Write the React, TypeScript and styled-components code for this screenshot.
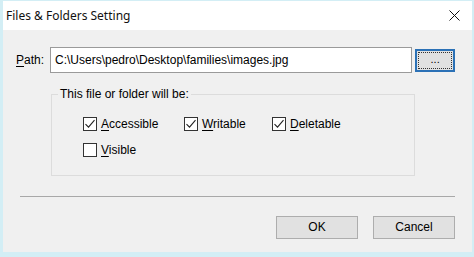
import React from "react";
import styled, { createGlobalStyle } from "styled-components";

const Global = createGlobalStyle`
  html, body { margin: 0; padding: 0; background: #d3eef5; }
  body { font-family: "Liberation Sans", Arial, sans-serif; font-size: 12px; color: #000; }
  * { box-sizing: border-box; }
`;

const Frame = styled.div`
  width: 474px;
  height: 257px;
  background: #d3eef5;
  padding: 1px 2px 5px 3px;
  display: flex;
  flex-direction: column;
`;

const TitleBar = styled.div`
  height: 29px;
  background: #ffffff;
  display: flex;
  align-items: center;
  justify-content: space-between;
  padding: 0 12px 0 3px;
  flex: none;
`;

const Title = styled.span`
  font-family: "Noto Sans", "Liberation Sans", sans-serif;
  font-size: 12px;
  color: #111;
`;

const Body = styled.div`
  flex: 1;
  background: #f0f0f0;
  display: flex;
  flex-direction: column;
  padding: 17px 17px 0 13px;
`;

const PathRow = styled.div`
  display: flex;
  align-items: center;
  height: 26px;
`;

const Label = styled.span`
  width: 34px;
  flex: none;
`;

const Key = styled.span`
  text-decoration: underline;
  text-underline-offset: 2px;
`;

const TextBox = styled.div`
  width: 365px;
  height: 26px;
  background: #fff;
  border: 1px solid #9a9a9a;
  display: flex;
  align-items: center;
  padding-left: 4px;
  white-space: nowrap;
`;

const BrowseButton = styled.button`
  margin-left: 3px;
  width: 40px;
  height: 23px;
  background: #e1e1e1;
  border: 2px solid #2b71b6;
  outline: 1px dotted #333;
  outline-offset: -4px;
  font: inherit;
  font-size: 11px;
  padding: 0 0 2px;
  color: #000;
`;

const Group = styled.fieldset`
  margin: 13px 0 0 35px;
  width: 364px;
  height: 90px;
  border: 1px solid #dcdcdc;
  padding: 14px 0 0 4px;
  display: flex;
  flex-direction: column;
  gap: 10px;
`;

const Legend = styled.legend`
  padding: 0 2px;
  margin-left: 2px;
  line-height: 16px;
`;

const Row = styled.div`
  display: flex;
  height: 16px;
  align-items: center;
  padding-left: 27px;
`;

const Check = styled.label<{ $w?: number }>`
  display: flex;
  align-items: center;
  width: ${(p) => (p.$w ? `${p.$w}px` : "auto")};
  gap: 4px;
`;

const Box = styled.span`
  width: 14px;
  height: 14px;
  border: 1px solid #333;
  background: #fff;
  display: flex;
  align-items: center;
  justify-content: center;
`;

const Separator = styled.div`
  margin: 20px 0 0 4px;
  width: 435px;
  height: 1px;
  background: #a8a8a8;
`;

const Buttons = styled.div`
  display: flex;
  justify-content: flex-end;
  gap: 15px;
  margin-top: 19px;
`;

const Button = styled.button`
  width: 82px;
  height: 23px;
  background: #e1e1e1;
  border: 1px solid #adadad;
  font: inherit;
  color: #000;
  padding: 0 0 1px;
`;

const Tick = () => (
  <svg width="12" height="12" viewBox="0 0 12 12">
    <path d="M1.5 6.2 L4.5 9.2 L10.5 2.2" fill="none" stroke="#222" strokeWidth="1.1" />
  </svg>
);

const CheckBox: React.FC<{ checked?: boolean; k: string; rest: string; w?: number }> = ({ checked, k, rest, w }) => (
  <Check $w={w}>
    <Box>{checked && <Tick />}</Box>
    <span>
      <Key>{k}</Key>
      {rest}
    </span>
  </Check>
);

export default function App() {
  return (
    <>
      <Global />
      <Frame>
        <TitleBar>
          <Title>Files &amp; Folders Setting</Title>
          <svg width="11" height="11" viewBox="0 0 11 11">
            <path d="M0.5 0.5 L10.5 10.5 M10.5 0.5 L0.5 10.5" stroke="#111" strokeWidth="1" />
          </svg>
        </TitleBar>
        <Body>
          <PathRow>
            <Label>
              <Key>P</Key>ath:
            </Label>
            <TextBox>C:\Users\pedro\Desktop\families\images.jpg</TextBox>
            <BrowseButton>...</BrowseButton>
          </PathRow>
          <Group>
            <Legend>This file or folder will be:</Legend>
            <Row>
              <CheckBox checked k="A" rest="ccessible" w={101} />
              <CheckBox checked k="W" rest="ritable" w={88} />
              <CheckBox checked k="D" rest="eletable" />
            </Row>
            <Row>
              <CheckBox k="V" rest="isible" />
            </Row>
          </Group>
          <Separator />
          <Buttons>
            <Button>OK</Button>
            <Button>Cancel</Button>
          </Buttons>
        </Body>
      </Frame>
    </>
  );
}
